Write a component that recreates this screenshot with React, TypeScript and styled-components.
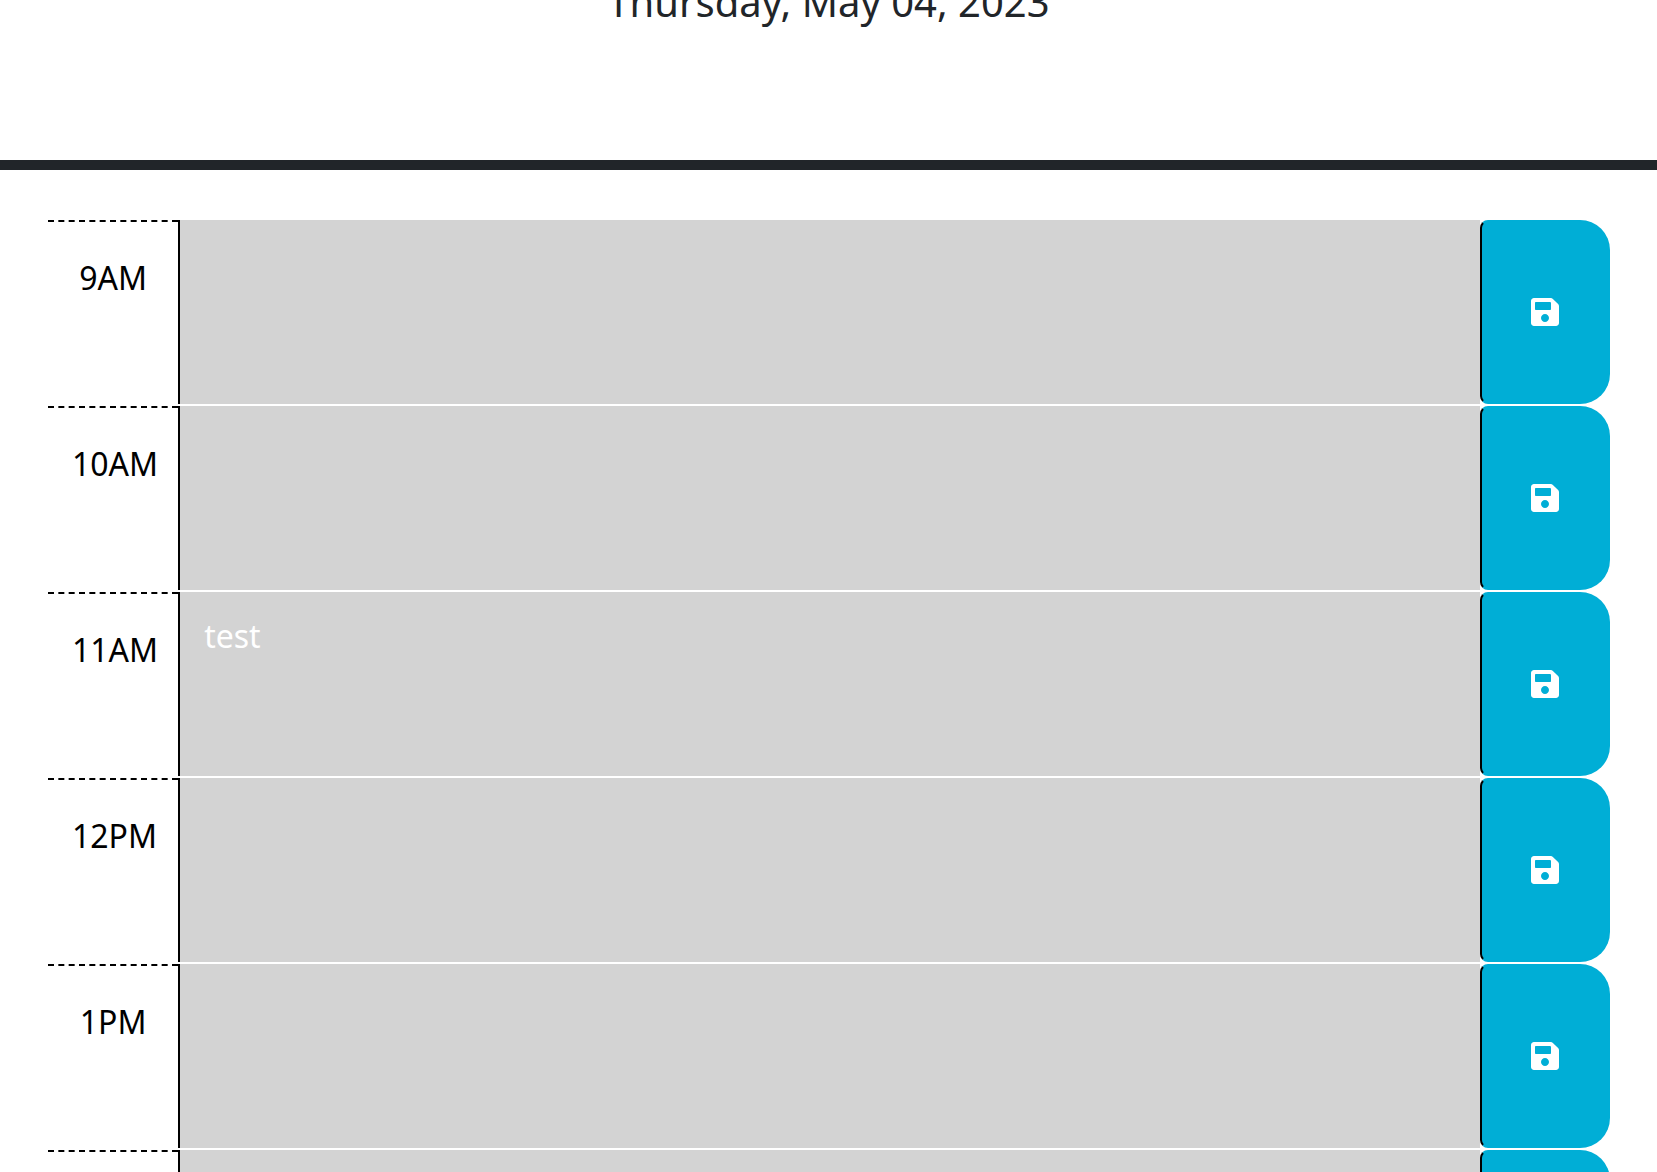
import React from "react";
import styled, { createGlobalStyle } from "styled-components";
import { FaSave } from "react-icons/fa";

const GlobalStyle = createGlobalStyle`
  *, *::before, *::after { box-sizing: border-box; }
  body {
    margin: 0;
    background: #ffffff;
    color: #212529;
    font-family: "Noto Sans", "Liberation Sans", sans-serif;
    font-size: 32px;
    line-height: 48px;
  }
`;

const Page = styled.div`
  display: flex;
  flex-direction: column;
  height: 100vh;
  overflow: hidden;
`;

const Header = styled.header`
  flex: none;
  margin-top: -28px;
  padding-bottom: 128px;
  border-bottom: 10px solid #212529;
  text-align: center;
`;

const CurrentDay = styled.p`
  margin: 0;
  font-size: 40px;
  line-height: 60px;
`;

const Schedule = styled.main`
  display: flex;
  flex-direction: column;
  gap: 2px;
  padding: 50px 47px 0 48px;
`;

const TimeBlock = styled.div`
  display: grid;
  grid-template-columns: minmax(0, 1fr) minmax(0, 10fr) minmax(0, 1fr);
  flex: none;
  height: 184px;
`;

const Hour = styled.label`
  padding: 32px 24px;
  border-top: 2px dashed #000000;
  color: #000000;
  text-align: center;
`;

const Description = styled.textarea`
  display: block;
  width: 100%;
  height: 100%;
  margin: 0;
  padding: 20px 24px;
  border: 0;
  border-left: 2px solid #000000;
  border-radius: 0;
  outline: none;
  resize: none;
  background: #d3d3d3;
  color: #ffffff;
  font: inherit;
`;

const SaveButton = styled.button`
  display: flex;
  align-items: center;
  justify-content: center;
  padding: 0;
  border: 2px solid #00aed6;
  border-left-color: #000000;
  border-radius: 8px 30px 30px 8px;
  background: #00aed6;
  color: #ffffff;
  font-size: 32px;
  cursor: pointer;

  svg {
    width: 28px;
    height: 32px;
  }
`;

const blocks = [
  { hour: "9AM", text: "" },
  { hour: "10AM", text: "" },
  { hour: "11AM", text: "test" },
  { hour: "12PM", text: "" },
  { hour: "1PM", text: "" },
  { hour: "2PM", text: "" },
];

export default function App() {
  return (
    <Page>
      <GlobalStyle />
      <Header>
        <CurrentDay>Thursday, May 04, 2023</CurrentDay>
      </Header>
      <Schedule>
        {blocks.map(({ hour, text }) => (
          <TimeBlock key={hour}>
            <Hour htmlFor={`hour-${hour}`}>{hour}</Hour>
            <Description id={`hour-${hour}`} defaultValue={text} spellCheck={false} />
            <SaveButton type="button" aria-label="save">
              <FaSave aria-hidden="true" />
            </SaveButton>
          </TimeBlock>
        ))}
      </Schedule>
    </Page>
  );
}
